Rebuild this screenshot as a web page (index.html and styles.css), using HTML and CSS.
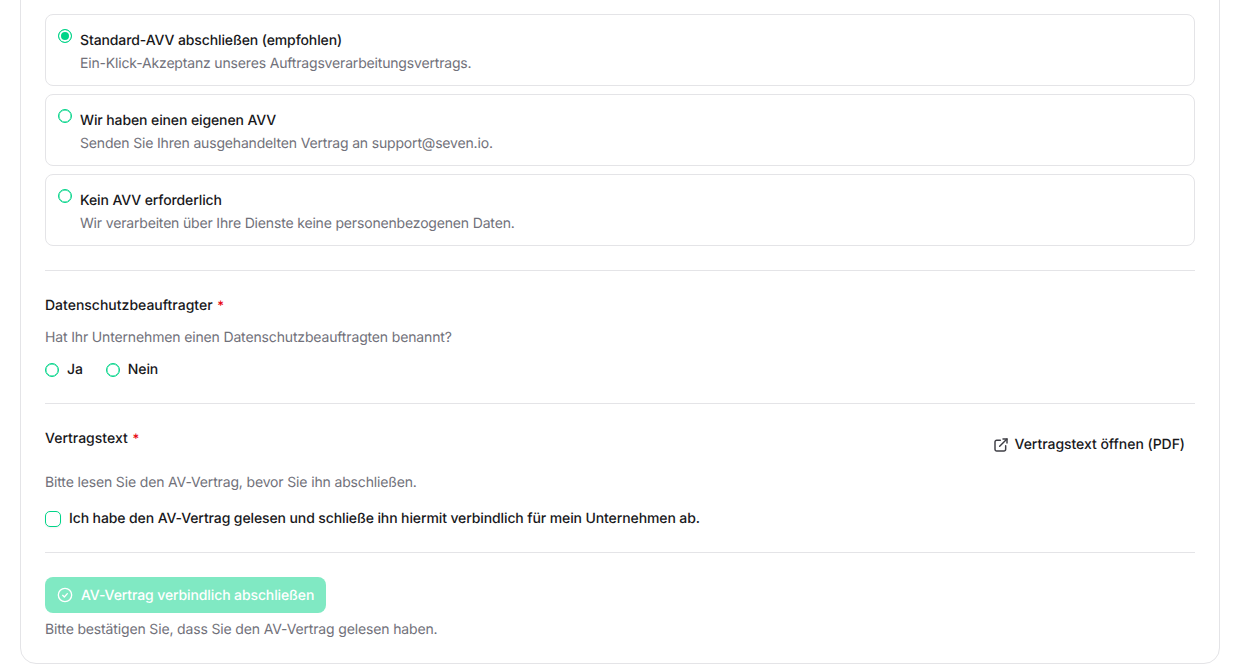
FILE: index.html
```html
<!DOCTYPE html>
<html lang="de">
<head>
  <meta charset="utf-8">
  <title>AV-Vertrag</title>
  <link rel="stylesheet" href="styles.css">
</head>
<body>
  <div class="card">
    <div class="options">
      <label class="option">
        <span class="radio radio-on"></span>
        <span class="option-text">
          <span class="option-title">Standard-AVV abschließen (empfohlen)</span>
          <span class="option-desc">Ein-Klick-Akzeptanz unseres Auftragsverarbeitungsvertrags.</span>
        </span>
      </label>
      <label class="option">
        <span class="radio"></span>
        <span class="option-text">
          <span class="option-title">Wir haben einen eigenen AVV</span>
          <span class="option-desc">Senden Sie Ihren ausgehandelten Vertrag an support@seven.io.</span>
        </span>
      </label>
      <label class="option">
        <span class="radio"></span>
        <span class="option-text">
          <span class="option-title">Kein AVV erforderlich</span>
          <span class="option-desc">Wir verarbeiten über Ihre Dienste keine personenbezogenen Daten.</span>
        </span>
      </label>
    </div>

    <section class="section section-dpo">
      <div class="label">Datenschutzbeauftragter <span class="req">*</span></div>
      <p class="desc">Hat Ihr Unternehmen einen Datenschutzbeauftragten benannt?</p>
      <div class="inline-radios">
        <label class="inline-radio"><span class="radio"></span>Ja</label>
        <label class="inline-radio"><span class="radio"></span>Nein</label>
      </div>
    </section>

    <section class="section section-text">
      <div class="label-row">
        <div class="label">Vertragstext <span class="req">*</span></div>
        <a class="pdf-link" href="#">
          <svg class="pdf-icon" viewBox="0 0 24 24" fill="none" stroke="currentColor" stroke-width="2.2" stroke-linecap="round" stroke-linejoin="round"><path d="M11 5H5.500A2.500 2.500 0 0 0 3 7.500V18.500A2.500 2.500 0 0 0 5.500 21H16.500A2.500 2.500 0 0 0 19 18.500V13"/><path d="M10 14L21 3"/><path d="M15 3h6v6"/></svg>
          Vertragstext öffnen (PDF)
        </a>
      </div>
      <p class="desc desc-text">Bitte lesen Sie den AV-Vertrag, bevor Sie ihn abschließen.</p>
      <label class="check-row"><span class="checkbox"></span>Ich habe den AV-Vertrag gelesen und schließe ihn hiermit verbindlich für mein Unternehmen ab.</label>
    </section>

    <section class="section section-submit">
      <button class="submit" type="button" disabled>
        <svg class="submit-icon" viewBox="0 0 24 24" fill="none" stroke="currentColor" stroke-width="2" stroke-linecap="round" stroke-linejoin="round"><circle cx="12" cy="12" r="10"/><path d="M8.500 12.500l2.500 2.500 4.500-5"/></svg>
        <span class="submit-text">AV-Vertrag verbindlich abschließen</span>
      </button>
      <p class="hint">Bitte bestätigen Sie, dass Sie den AV-Vertrag gelesen haben.</p>
    </section>
  </div>
</body>
</html>
```

FILE: styles.css
```css
* { box-sizing: border-box; }

html, body { height: 100%; }

body {
  margin: 0;
  overflow: hidden;
  background: #fff;
  color: #18181b;
  font-family: Inter, "Liberation Sans", sans-serif;
  font-size: 14px;
  font-weight: 500;
  letter-spacing: -.11px;
  line-height: 20px;
  text-rendering: geometricPrecision;
}

.card {
  width: 1200px;
  height: 685px;
  margin: -21px 0 0 20px;
  padding: 34px 24px 0;
  background: #fff;
  border: 1px solid #e4e4e7;
  border-radius: 16px;
}

.options { display: flex; flex-direction: column; gap: 8px; }

.option {
  display: flex;
  gap: 8px;
  height: 72px;
  padding: 14px 12px 0;
  border: 1px solid #e4e4e7;
  border-radius: 8px;
}

.option-text { display: flex; flex-direction: column; gap: 3px; padding-top: 2px; }
.option-desc { color: #71717a; font-weight: 400; letter-spacing: -.17px; }

.radio {
  flex: none;
  width: 14px;
  height: 14px;
  border: 1px solid #00d488;
  border-radius: 50%;
  background: #fff;
  box-shadow: inset 0 0 0 .4px #00d488;
}

.radio-on { border: 1.5px solid #00d488; box-shadow: inset 0 0 0 2px #fff; background: #00d488; }

.section { border-top: 1px solid #e4e4e7; }

.section-dpo { margin-top: 24px; height: 133px; padding-top: 25px; }
.section-text { height: 149px; padding-top: 25px; }
.section-submit { padding-top: 24px; }

.label { letter-spacing: 0; }
.req { margin-left: 1px; color: #e7000b; font-size: 13px; }

.desc { margin: 12px 0 0; color: #71717a; font-weight: 400; letter-spacing: -.15px; }

.inline-radios { display: flex; gap: 23px; margin-top: 12px; }
.inline-radio { display: flex; align-items: center; gap: 8px; }

.label-row { display: flex; justify-content: space-between; align-items: flex-start; }

.pdf-link {
  display: flex;
  align-items: center;
  gap: 6px;
  margin: 6px 10px 0 0;
  color: #18181b;
  letter-spacing: -.04px;
  text-decoration: none;
}

.pdf-icon { width: 16px; height: 16px; color: #3f3f46; }

.desc-text { margin-top: 18px; }

.check-row { display: flex; align-items: center; gap: 8px; margin-top: 16px; }

.checkbox {
  flex: none;
  width: 16px;
  height: 16px;
  border: 1px solid #00d488;
  border-radius: 5px;
  box-shadow: 0 1px 2px rgba(0, 0, 0, .05);
}

.submit {
  display: flex;
  align-items: center;
  gap: 8px;
  height: 36px;
  padding: 0 12px;
  border: 0;
  border-radius: 8px;
  background: #80e9c3;
  color: #fff;
  font: 500 14px/20px Inter, "Liberation Sans", sans-serif;
  letter-spacing: -.11px;
  text-rendering: geometricPrecision;
}

.submit-icon { width: 16px; height: 16px; }
.submit-text { position: relative; top: 1px; }

.hint { margin: 7px 0 0; color: #71717a; font-weight: 400; letter-spacing: -.15px; }
```
